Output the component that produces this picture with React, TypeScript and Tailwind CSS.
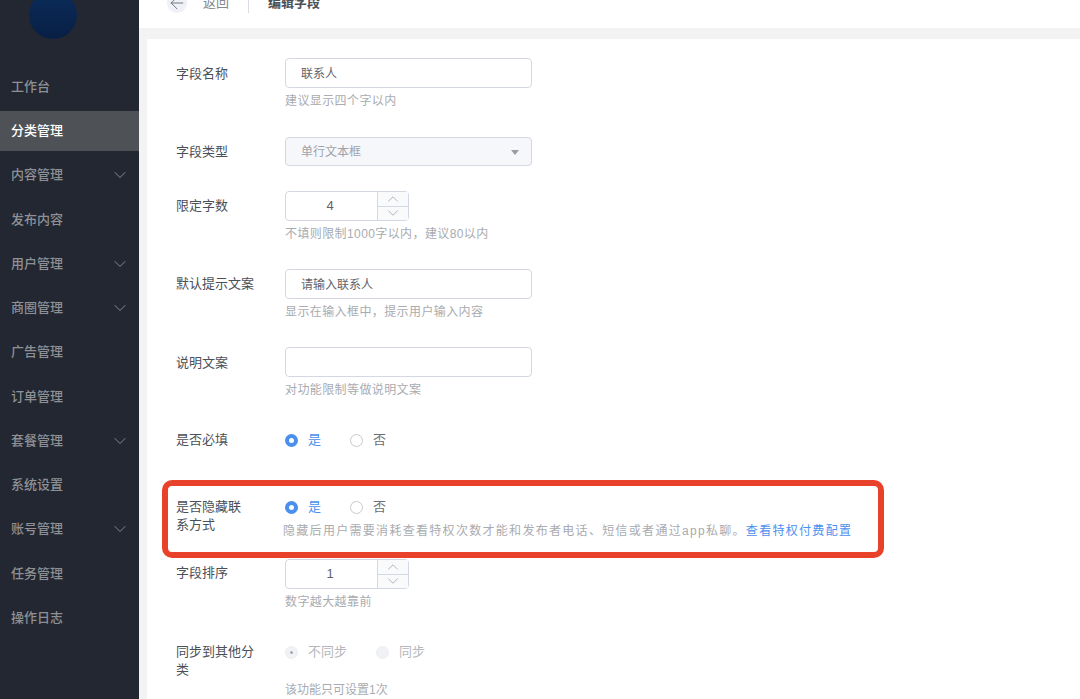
import { ArrowLeft, ChevronDown, ChevronUp } from "lucide-react";
import type { ReactNode } from "react";

const navItems = [
  { label: "工作台" },
  { label: "分类管理", active: true },
  { label: "内容管理", arrow: true },
  { label: "发布内容" },
  { label: "用户管理", arrow: true },
  { label: "商圈管理", arrow: true },
  { label: "广告管理" },
  { label: "订单管理" },
  { label: "套餐管理", arrow: true },
  { label: "系统设置" },
  { label: "账号管理", arrow: true },
  { label: "任务管理" },
  { label: "操作日志" },
];

function Sidebar() {
  return (
    <aside className="w-[139px] h-full flex-shrink-0 bg-[#222731] overflow-hidden">
      <div className="w-[48px] h-[48px] rounded-full -mt-[9px] ml-[29px] bg-gradient-to-b from-[#0a2c5a] to-[#081f44]" />
      <nav className="mt-[28px] flex flex-col gap-[4.25px]">
        {navItems.map((item) => (
          <div
            key={item.label}
            className={`h-[40px] pl-[11px] pr-[9px] pb-px flex items-center justify-between text-[13px] font-medium ${
              item.active ? "bg-[#4e5257] text-white font-bold" : "text-[#8e9095]"
            }`}
          >
            <span>{item.label}</span>
            {item.arrow && <ChevronDown size={20} strokeWidth={1.1} />}
          </div>
        ))}
      </nav>
    </aside>
  );
}

function Row({ label, top, labelTop, children }: { label: ReactNode; top: string; labelTop: string; children: ReactNode }) {
  return (
    <div className={`relative flex ${top}`}>
      <div className={`w-[68px] mr-[40px] -ml-px flex-shrink-0 whitespace-nowrap text-[13px] leading-[18px] text-[#4b4f57] ${labelTop}`}>
        {label}
      </div>
      <div className="flex-1 min-w-0 ml-px">{children}</div>
    </div>
  );
}

function Hint({ children }: { children: ReactNode }) {
  return <p className="mt-[4px] h-[17px] text-[12px] leading-[18px] tracking-[0.4px] text-[#a9abb0]">{children}</p>;
}

function TextBox({ value }: { value?: string }) {
  return (
    <div className="w-[247px] h-[30px] pl-[15px] pr-[15px] pt-px flex items-center rounded-[4px] border border-[#d3d8e2] bg-white text-[12px] text-[#5f6369]">
      {value}
    </div>
  );
}

function Stepper({ value }: { value: string }) {
  return (
    <div className="w-[124px] h-[30px] flex rounded-[4px] border border-[#d3d8e2] bg-white">
      <div className="flex-1 pr-[3px] flex items-center justify-center text-[13px] text-[#5f6369]">{value}</div>
      <div className="w-[31px] flex flex-col border-l border-[#d3d8e2] bg-[#f9fafc] text-[#9a9ea6]">
        <div className="flex-1 flex items-center justify-center border-b border-[#d3d8e2] overflow-hidden">
          <ChevronUp size={18} strokeWidth={1} />
        </div>
        <div className="flex-1 flex items-center justify-center overflow-hidden">
          <ChevronDown size={18} strokeWidth={1} />
        </div>
      </div>
    </div>
  );
}

function Radio({ label, checked, disabled }: { label: string; checked?: boolean; disabled?: boolean }) {
  let dot = "border border-[#c6c9cf] bg-white";
  if (checked) dot = "bg-[#4a8fee]";
  if (disabled) dot = "bg-[#f1f2f6] border border-[#eceef3]";
  let color = "text-[#6b6f76]";
  if (checked) color = "text-[#4a8fee]";
  if (disabled) color = "text-[#b5b7bc]";
  return (
    <div className="flex items-center gap-[10px] h-[20px]">
      <span className={`w-[13px] h-[13px] rounded-full flex items-center justify-center ${dot}`}>
        {checked && !disabled && <span className="w-[5px] h-[5px] rounded-full bg-white" />}
        {checked && disabled && <span className="w-[3px] h-[3px] rounded-full bg-[#a9abb0]" />}
      </span>
      <span className={`text-[13px] leading-[20px] ${color}`}>{label}</span>
    </div>
  );
}

export default function App() {
  return (
    <div className="w-[1080px] h-[699px] flex overflow-hidden bg-[#f3f3f4] font-['Liberation_Sans','Noto_Sans_CJK_SC',sans-serif]">
      <Sidebar />
      <main className="flex-1 min-w-0 h-full overflow-hidden">
        {/* Header */}
        <header className="h-[28px] bg-white pl-[28px] flex items-start">
          <div className="-mt-[7px] flex items-center h-[20px]">
            <div className="w-[20px] h-[20px] rounded-full bg-[#eff1f6] flex items-center justify-center text-[#6b6f76]">
              <ArrowLeft size={20} strokeWidth={1.1} />
            </div>
            <span className="ml-[16px] text-[13px] text-[#85888e]">返回</span>
            <span className="ml-[19px] w-px h-[20px] bg-[#d9dce3]" />
            <span className="ml-[19px] text-[13px] font-bold text-[#4b4f57]">编辑字段</span>
          </div>
        </header>

        {/* Form */}
        <section className="mt-[11px] ml-[8px] h-[660px] bg-white pl-[30px] pt-[19px] overflow-hidden">
          <Row label="字段名称" top="" labelTop="pt-[7px]">
            <TextBox value="联系人" />
            <Hint>建议显示四个字以内</Hint>
          </Row>
          <Row label="字段类型" top="mt-[28px]" labelTop="pt-[6px]">
            <div className="w-[247px] h-[29px] pl-[15px] pr-[12px] pt-px flex items-center justify-between rounded-[4px] border border-[#d3d8e2] bg-[#f5f7fb] text-[12px] text-[#a0a3a9]">
              <span>单行文本框</span>
              <span className="w-0 h-0 border-x-[4px] border-x-transparent border-t-[5px] border-t-[#989ca4]" />
            </div>
          </Row>
          <Row label="限定字数" top="mt-[25px]" labelTop="pt-[6px]">
            <Stepper value="4" />
            <Hint>不填则限制1000字以内，建议80以内</Hint>
          </Row>
          <Row label="默认提示文案" top="mt-[27px]" labelTop="pt-[6px]">
            <TextBox value="请输入联系人" />
            <Hint>显示在输入框中，提示用户输入内容</Hint>
          </Row>
          <Row label="说明文案" top="mt-[27px]" labelTop="pt-[7px]">
            <TextBox />
            <Hint>对功能限制等做说明文案</Hint>
          </Row>
          <Row label="是否必填" top="mt-[32px]" labelTop="pt-px">
            <div className="flex gap-[29px]">
              <Radio label="是" checked />
              <Radio label="否" />
            </div>
          </Row>
          <Row
            label={
              <>
                是否隐藏联
                <br />
                系方式
              </>
            }
            top="mt-[47px]"
            labelTop="pt-px"
          >
            <div className="flex gap-[29px]">
              <Radio label="是" checked />
              <Radio label="否" />
            </div>
            <p className="mt-[5px] -ml-[2px] h-[18px] whitespace-nowrap text-[12px] leading-[18px] tracking-[1.3px] text-[#a9abb0]">
              隐藏后用户需要消耗查看特权次数才能和发布者电话、短信或者通过app私聊。
              <span className="text-[#4a8fee]">查看特权付费配置</span>
            </p>
            {/* Red annotation box */}
            <div className="absolute -left-[15px] -top-[17px] w-[722px] h-[78px] rounded-[10px] border-[6px] border-[#e8432a]" />
          </Row>
          <Row label="字段排序" top="mt-[19px]" labelTop="pt-[5px]">
            <Stepper value="1" />
            <Hint>数字越大越靠前</Hint>
          </Row>
          <Row
            label={
              <>
                同步到其他分
                <br />
                类
              </>
            }
            top="mt-[32px]"
            labelTop="pt-px"
          >
            <div className="flex gap-[29px]">
              <Radio label="不同步" checked disabled />
              <Radio label="同步" disabled />
            </div>
            <p className="mt-[19px] h-[18px] text-[12px] leading-[18px] text-[#a9abb0]">该功能只可设置1次</p>
          </Row>
        </section>
      </main>
    </div>
  );
}
